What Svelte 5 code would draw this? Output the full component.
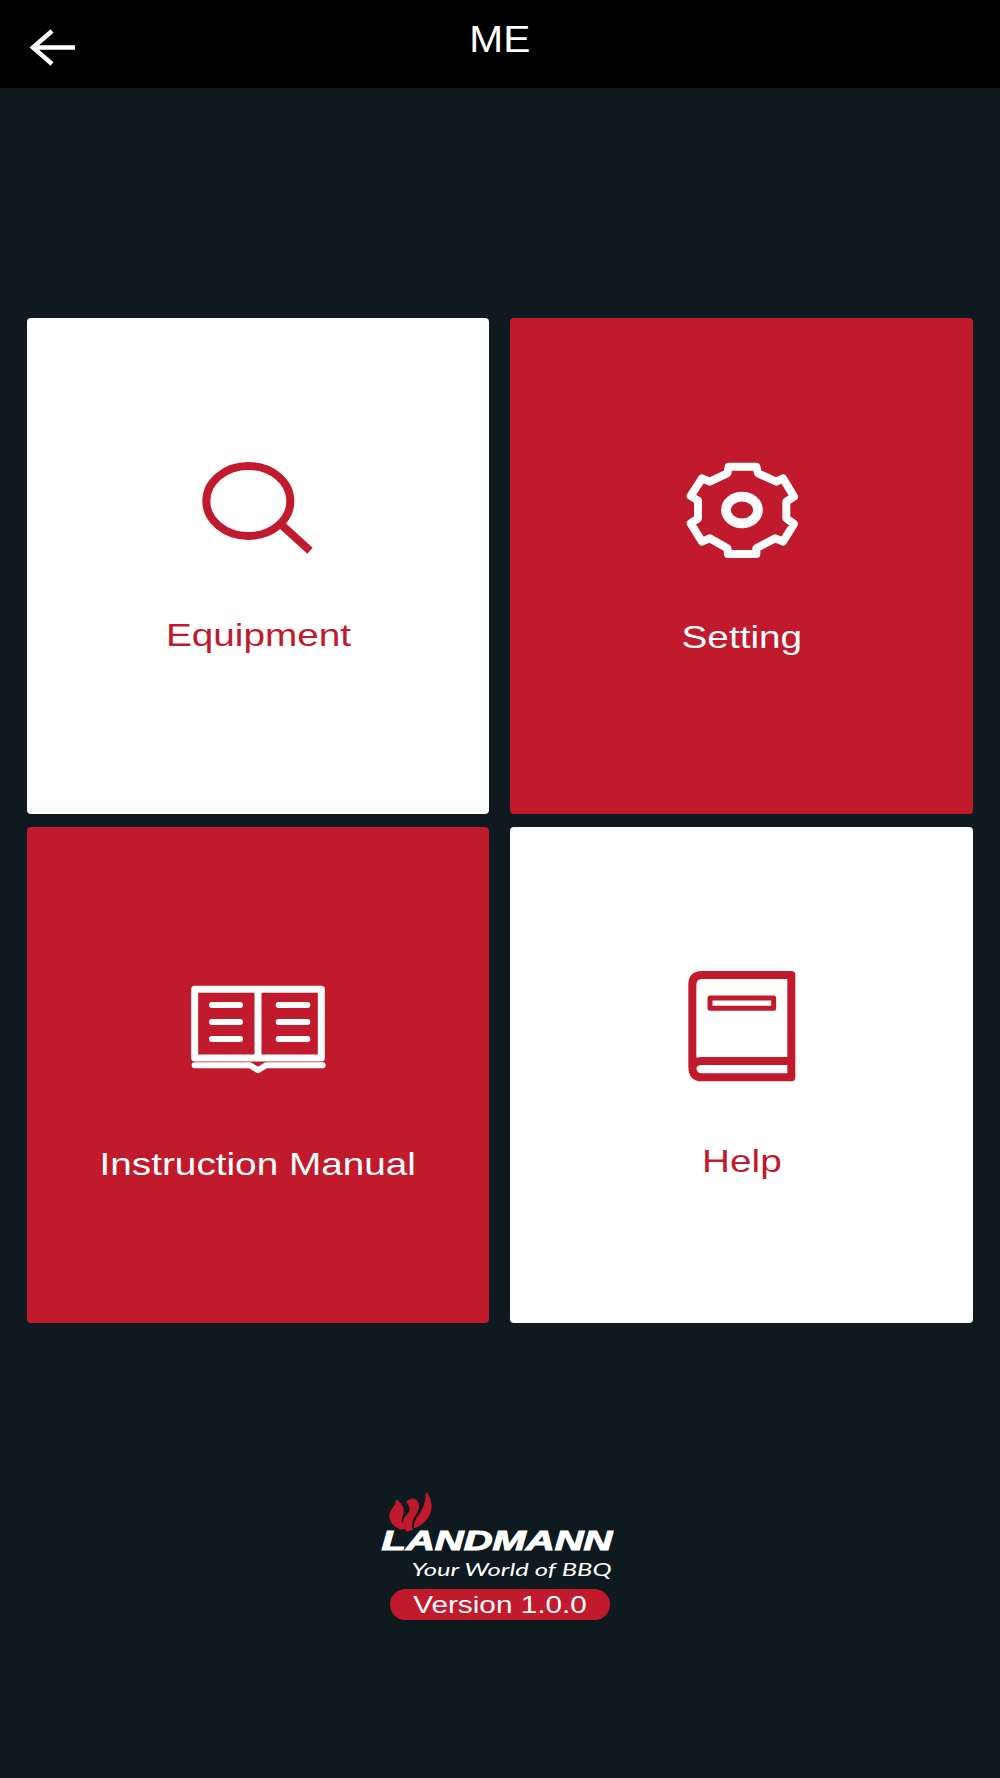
<script>
  const lines = [135, 186, 237];
</script>

<div class="page">
  <header class="bar">
    <svg class="back" viewBox="0 0 50 40" width="50" height="40" aria-label="Back">
      <path d="M47 19.5H5M24 3 5 19.500 24 36" />
    </svg>
    <h1><span>ME</span></h1>
  </header>

  <main class="grid">
    <button class="tile white equipment">
      <svg viewBox="144 84 360 300" width="120" height="100">
        <ellipse cx="295" cy="213" rx="126" ry="105" />
        <path d="M395 285 480 362" />
      </svg>
      <span class="label">Equipment</span>
    </button>

    <button class="tile red setting">
      <svg viewBox="122 72 360 330" width="120" height="110">
        <path d="M262 110H345L350 130 405 155 425 145 458 200 435 215V265L458 282 425 335 402 325 345 355V372H260L258 355 205 325 182 335 148 280 170 265V212L148 198 182 145 205 155 258 130Z" />
        <ellipse cx="302" cy="240" rx="48" ry="40" class="hub" />
      </svg>
      <span class="label">Setting</span>
    </button>

    <button class="tile red manual">
      <svg viewBox="52 69 420 280" width="140" height="93.33">
        <path class="thick" d="M72 88H452V294H72ZM262 88V294" />
        {#each lines as y}
          <path class="rule" d="M124 {y}H208M324 {y}H410" />
        {/each}
        <path class="rule" d="M72 316H238L262 331 286 316H456" />
      </svg>
      <span class="label">Instruction Manual</span>
    </button>

    <button class="tile white help">
      <svg viewBox="35 54 360 350" width="120" height="116.67">
        <path d="M363 75H95Q66 75 66 105V350Q66 382 95 382H363ZM66 355Q68 333 95 333H363" />
        <rect x="119" y="144" width="191" height="31" class="plate" />
      </svg>
      <span class="label">Help</span>
    </button>
  </main>

  <footer class="brand">
    <div class="logo">
      <svg class="flames" viewBox="24 22 136 118" width="45.3" height="39.3">
        <path d="M62 132C38 124 24 100 34 80 40 68 50 62 50 48 66 58 74 76 66 92 60 106 64 120 76 130Z" />
        <path d="M82 138C68 122 68 104 82 92 94 82 96 68 82 52 90 44 100 42 108 48 118 58 116 74 104 92 94 106 90 120 96 134Z" />
        <path d="M104 128C102 110 116 96 124 84 132 70 140 50 140 26 152 44 158 70 146 92 136 108 122 122 104 128Z" />
      </svg>
      <div class="wordmark"><span>LANDMANN</span></div>
      <div class="tagline"><span>Your World of BBQ</span></div>
    </div>
    <div class="version"><span>Version 1.0.0</span></div>
  </footer>
</div>

<style>
  :global(body) {
    background: #0f1a20;
  }

  .page {
    min-height: 1778px;
    background: #0f1a20;
    font-family: "Liberation Sans", Arial, sans-serif;
    color: #fff;
  }

  .bar {
    height: 88px;
    background: #000;
    display: grid;
    grid-template-columns: 1fr auto 1fr;
    box-sizing: border-box;
    padding-left: 28px;
  }

  .back {
    grid-column: 1;
    grid-row: 1;
    margin-top: 28px;
    display: block;
  }

  .back path {
    fill: none;
    stroke: #fff;
    stroke-width: 4.5;
  }

  h1 {
    grid-column: 2;
    grid-row: 1;
    margin: 19px 28px 0 0;
    font-size: 37px;
    font-weight: 400;
    line-height: 42px;
  }

  h1 span {
    display: inline-block;
    transform: scaleX(1.1);
  }

  .grid {
    display: grid;
    grid-template-columns: 462px 463px;
    grid-auto-rows: 496px;
    column-gap: 21px;
    row-gap: 13px;
    padding: 230px 27px 0;
  }

  .tile {
    all: unset;
    display: flex;
    flex-direction: column;
    align-items: center;
    border-radius: 4px;
    box-sizing: border-box;
    font-family: "Liberation Sans", Arial, sans-serif;
  }

  .tile svg {
    display: block;
    flex: none;
  }

  .tile svg * {
    fill: none;
    stroke: currentColor;
    stroke-width: 24;
    stroke-linejoin: round;
  }

  .label {
    display: block;
    font-size: 32px;
    line-height: 36px;
    white-space: nowrap;
    transform: scaleX(1.21);
  }

  .white {
    background: #fff;
    color: #c11a2c;
  }

  .red {
    background: #c11a2c;
    color: #fff;
  }

  .equipment {
    padding-top: 140px;
  }

  .equipment svg {
    margin-bottom: 59px;
  }

  .setting {
    padding-top: 136px;
  }

  .setting svg {
    margin-bottom: 55px;
  }

  .tile svg .hub {
    stroke-width: 29;
  }

  .manual {
    padding-top: 156px;
  }

  .manual svg {
    margin-bottom: 70px;
  }

  .tile svg .thick {
    stroke-width: 21;
  }

  .tile svg .rule {
    stroke-width: 18;
    stroke-linecap: round;
  }

  .help {
    padding-top: 141px;
  }

  .help svg {
    margin-bottom: 58px;
  }

  .tile svg .plate {
    stroke-width: 15;
  }

  .brand {
    display: flex;
    flex-direction: column;
    align-items: center;
    padding-top: 169px;
  }

  .logo {
    width: 240px;
    display: flex;
    flex-direction: column;
    align-items: center;
  }

  .flames {
    align-self: flex-start;
    margin-left: 8px;
    display: block;
    overflow: visible;
  }

  .flames path {
    fill: #c11a2c;
    stroke: #c11a2c;
    stroke-width: 5;
    stroke-linejoin: round;
  }

  .wordmark {
    margin-top: -2px;
    font-size: 27px;
    line-height: 24px;
    font-weight: 700;
    font-style: italic;
    transform: translateX(-3px);
  }

  .wordmark span {
    display: inline-block;
    transform: scaleX(1.48);
    -webkit-text-stroke: 1px #fff;
  }

  .tagline {
    margin-top: 5px;
    font-family: "Lato", "Liberation Sans", sans-serif;
    font-style: italic;
    font-weight: 400;
    font-size: 18px;
    line-height: 22px;
    transform: translateX(11px);
  }

  .tagline span {
    display: inline-block;
    transform: scaleX(1.42);
  }

  .version {
    margin-top: 9px;
    width: 220px;
    height: 31px;
    border-radius: 16px;
    background: #c11a2c;
    text-align: center;
    font-size: 24px;
    line-height: 31px;
  }

  .version span {
    display: inline-block;
    transform: scaleX(1.24);
  }
</style>
